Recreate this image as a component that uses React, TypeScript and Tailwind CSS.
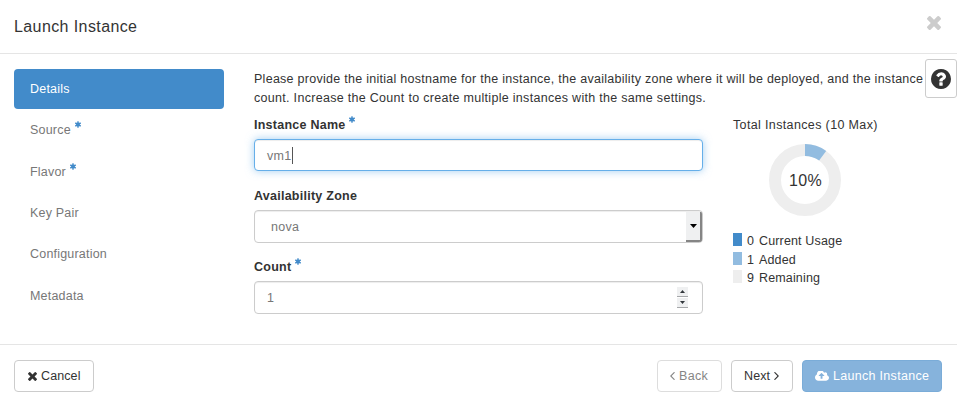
import React from 'react';

type IconProps = { className?: string };

const Times = ({ className }: IconProps) => (
  <svg viewBox="302 366 1188 1188" fill="currentColor" className={className}>
    <path d="M1490 1322q0 40-28 68l-136 136q-28 28-68 28t-68-28l-294-294-294 294q-28 28-68 28t-68-28l-136-136q-28-28-28-68t28-68l294-294-294-294q-28-28-28-68t28-68l136-136q28-28 68-28t68 28l294 294 294-294q28-28 68-28t68 28l136 136q28 28 28 68t-28 68l-294 294 294 294q28 28 28 68z" />
  </svg>
);

const Question = ({ className }: IconProps) => (
  <svg viewBox="128 128 1536 1536" fill="currentColor" className={className}>
    <path d="M1024 1376v-192q0-14-9-23t-23-9h-192q-14 0-23 9t-9 23v192q0 14 9 23t23 9h192q14 0 23-9t9-23zm256-672q0-88-55.5-163t-138.5-116-170-41q-243 0-371 213-15 24 8 42l132 100q7 6 19 6 16 0 25-12 53-68 86-92 34-24 86-24 48 0 85.5 26t37.5 59q0 38-20 61t-68 45q-63 28-115.5 86.5t-52.5 125.5v36q0 14 9 23t23 9h192q14 0 23-9t9-23q0-19 21.5-49.5t54.5-49.5q32-18 49-28.5t46-35 44.5-48 28-60.5 12.5-81zm384 192q0 209-103 385.5t-279.5 279.5-385.5 103-385.5-103-279.5-279.5-103-385.5 103-385.5 279.5-279.5 385.5-103 385.5 103 279.5 279.5 103 385.5z" />
  </svg>
);

const CloudUpload = ({ className }: IconProps) => (
  <svg viewBox="-64 256 1920 1280" fill="currentColor" className={className}>
    <path d="M1216 864q0-14-9-23l-352-352q-9-9-23-9t-23 9l-351 351q-10 12-10 24 0 14 9 23t23 9h224v352q0 13 9.5 22.5t22.5 9.5h192q13 0 22.5-9.5t9.5-22.5v-352h224q13 0 22.5-9.5t9.5-22.5zm640 288q0 159-112.5 271.5t-271.5 112.5h-1088q-185 0-316.5-131.5t-131.5-316.5q0-130 70-240t188-165q-2-30-2-43 0-212 150-362t362-150q156 0 285.5 87t188.5 231q71-62 166-62 106 0 181 75t75 181q0 76-41 138 130 31 213.5 135.5t83.5 238.5z" />
  </svg>
);

const Asterisk = ({ className = '' }: IconProps) => (
  <svg viewBox="186 128 1420 1536" fill="currentColor" className={`h-[7px] w-[6px] shrink-0 text-[#428bca] ${className}`}>
    <path d="M1546 1050q46 26 59.5 77.5t-12.5 97.5l-64 110q-26 46-77.5 59.5t-97.5-12.5l-266-153v307q0 52-38 90t-90 38h-128q-52 0-90-38t-38-90v-307l-266 153q-46 26-97.5 12.5t-77.5-59.5l-64-110q-26-46-12.5-97.5t59.5-77.5l266-154-266-154q-46-26-59.5-77.5t12.5-97.5l64-110q26-46 77.5-59.5t97.5 12.5l266 153v-307q0-52 38-90t90-38h128q52 0 90 38t38 90v307l266-153q46-26 97.5-12.5t77.5 59.5l64 110q26 46 12.5 97.5t-59.5 77.5l-266 154z" />
  </svg>
);

const Angle = ({ className }: IconProps) => (
  <svg viewBox="589 461 582 998" fill="currentColor" className={className}>
    <path d="M1171 960q0 13-10 23l-466 466q-10 10-23 10t-23-10l-50-50q-10-10-10-23t10-23l393-393-393-393q-10-10-10-23t10-23l50-50q10-10 23-10t23 10l466 466q10 10 10 23z" />
  </svg>
);

const steps = [
  { label: 'Details', active: true },
  { label: 'Source', required: true },
  { label: 'Flavor', required: true },
  { label: 'Key Pair' },
  { label: 'Configuration' },
  { label: 'Metadata' },
];

const legend = [
  { color: 'bg-[#428bca]', value: 0, label: 'Current Usage' },
  { color: 'bg-[#92bce0]', value: 1, label: 'Added' },
  { color: 'bg-[#eeeeee]', value: 9, label: 'Remaining' },
];

const Label = ({ text, required }: { text: string; required?: boolean }) => (
  <div className="flex h-[19px] items-start font-bold leading-[18px] tracking-[0.25px]">
    {text}
    {required && <Asterisk className="ml-1" />}
  </div>
);

const field = 'flex w-full rounded-[4px] border border-[#cccccc] bg-white text-[#777777] shadow-[inset_0_1px_1px_rgba(0,0,0,0.075)]';

export default function App() {
  return (
    <div className="relative flex h-[404px] w-[957px] flex-col overflow-hidden bg-white font-['Liberation_Sans',Arial,sans-serif] text-[12.5px] tracking-[0.3px] text-[#333333]">
      <header className="flex h-[54px] shrink-0 items-start justify-between border-b border-[#e5e5e5] pl-[14px] pr-4">
        <h1 className="mt-[15px] text-[16px] leading-[24px] tracking-[0.4px]">Launch Instance</h1>
        <Times className="mt-[15.5px] h-[14px] w-[14px] text-[#cccccc]" />
      </header>

      <main className="flex h-[290px] shrink-0 pl-[14px] pt-[15px]">
        <nav className="flex w-[210px] shrink-0 flex-col gap-[1.3px] tracking-[0.2px]">
          {steps.map((s) => (
            <div
              key={s.label}
              className={`flex h-10 shrink-0 items-center rounded-[4px] pl-4 ${s.active ? 'bg-[#428bca] text-white' : 'pt-px text-[#777777]'}`}
            >
              {s.label}
              {s.required && <Asterisk className="mb-[12px] ml-1" />}
            </div>
          ))}
        </nav>

        <section className="ml-[30px] flex min-w-0 flex-1 flex-col">
          <p className="h-[47px] whitespace-nowrap pt-px leading-[19px]">
            <span className="tracking-[0.27px]">
              Please provide the initial hostname for the instance, the availability zone where it will be deployed, and the instance
            </span>
            <br />
            count. Increase the Count to create multiple instances with the same settings.
          </p>
          <div className="flex">
            <div className="w-[449px] shrink-0">
              <Label text="Instance Name" required />
              <div className="mt-1 flex h-8 w-full items-center rounded-[4px] border border-[#66afe9] bg-white pl-3 text-[#777777] shadow-[inset_0_1px_1px_rgba(0,0,0,0.075),0_0_8px_rgba(102,175,233,0.6)]">
                <span className="pt-0.5">vm1</span>
                <span className="h-[17px] w-px bg-[#555555]" />
              </div>
              <div className="mt-4">
                <Label text="Availability Zone" />
              </div>
              <div className={`${field} mt-1 h-[33px] items-stretch justify-between overflow-hidden`}>
                <span className="pl-4 leading-[33px]">nova</span>
                <span className="mt-px flex w-4 items-center justify-center border-b-2 border-r-2 border-[#858585] bg-[#eff0f1]">
                  <svg viewBox="0 0 7 4" className="h-1 w-[7px]"><path d="M0 0h7L3.5 4z" fill="#000" /></svg>
                </span>
              </div>
              <div className="mt-[15px]">
                <Label text="Count" required />
              </div>
              <div className={`${field} mt-1 h-[33px] items-center justify-between pr-[14px]`}>
                <span className="pl-3 pt-px">1</span>
                <span className="flex flex-col gap-px">
                  <span className="flex h-[10px] w-[11px] items-center justify-center border-b border-[#a5a7a9] bg-[#eff0f1]">
                    <svg viewBox="0 0 5 3" className="h-[3px] w-[5px]"><path d="M0 3h5L2.5 0z" fill="#31363b" /></svg>
                  </span>
                  <span className="flex h-[10px] w-[11px] items-center justify-center border-b border-[#a5a7a9] bg-[#eff0f1]">
                    <svg viewBox="0 0 5 3" className="h-[3px] w-[5px]"><path d="M0 0h5L2.5 3z" fill="#31363b" /></svg>
                  </span>
                </span>
              </div>
            </div>

            <aside className="ml-[30px] flex w-[180px] flex-col">
              <div className="leading-[19px] tracking-[0.36px]">Total Instances (10 Max)</div>
              <svg viewBox="0 0 72 72" className="ml-9 mt-[9px] h-[72px] w-[72px]">
                <circle cx="36" cy="36" r="30" fill="none" stroke="#eeeeee" strokeWidth="12" />
                <path d="M36 6A30 30 0 0 1 53.634 11.73" fill="none" stroke="#92bce0" strokeWidth="12" />
                <text x="36.5" y="42" textAnchor="middle" fontSize="16" fill="#333333">10%</text>
              </svg>
              <div className="mt-[16px] flex flex-col">
                {legend.map((l) => (
                  <div key={l.label} className="flex h-[18.5px] items-start leading-[18.5px]">
                    <span className={`mt-px h-[13px] w-[9px] ${l.color}`} />
                    <span className="ml-[5px] w-3">{l.value}</span>
                    <span className="tracking-[0.15px]">{l.label}</span>
                  </div>
                ))}
              </div>
            </aside>
          </div>
        </section>
      </main>

      <footer className="flex h-[60px] shrink-0 items-start border-t border-[#e5e5e5] pl-[14px] pr-[15px] pt-[15px]">
        <button className="flex h-8 w-20 items-center rounded-[4px] border border-[#cccccc] pl-[13px]">
          <Times className="mr-[4px] h-[9px] w-[9px]" />
          <span className="tracking-[0.1px]">Cancel</span>
        </button>
        <button className="ml-auto flex h-8 w-[65px] items-center rounded-[4px] border border-[#dddddd] pl-3 text-[#858585]">
          <Angle className="mr-1 h-2 w-[5px] rotate-180" />
          <span>Back</span>
        </button>
        <button className="ml-[9px] flex h-8 w-[62px] items-center rounded-[4px] border border-[#cccccc] pl-3">
          <span className="tracking-[0.1px]">Next</span>
          <Angle className="ml-1 h-2 w-[5px]" />
        </button>
        <button className="ml-[9px] flex h-8 w-[140px] items-center rounded-[4px] border border-[#7aacd8] bg-[#86b3dc] pl-3 text-white">
          <CloudUpload className="mr-1 h-[10px] w-[14px]" />
          <span>Launch Instance</span>
        </button>
      </footer>

      <button className="absolute left-[925px] top-[59px] flex h-[39px] w-8 items-center justify-center rounded-[3px] border border-[#cccccc] bg-white">
        <Question className="h-5 w-5" />
      </button>
    </div>
  );
}
